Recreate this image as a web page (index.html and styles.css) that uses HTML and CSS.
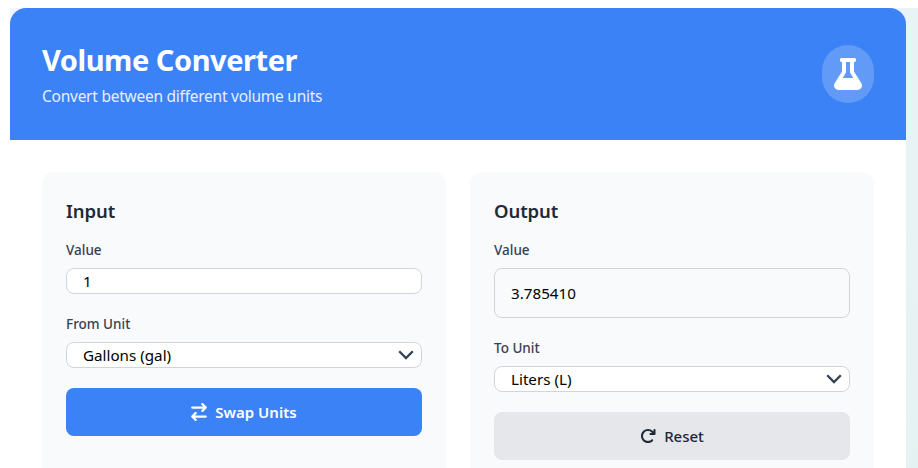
FILE: index.html
```html
<!DOCTYPE html>
<html lang="en">
<head>
    <meta charset="UTF-8">
    <title>Volume Converter</title>
    <link rel="stylesheet" href="styles.css">
</head>
<body>
<div class="wrap">
<div class="card">
    <header class="top">
        <div>
            <h1>Volume Converter</h1>
            <p>Convert between different volume units</p>
        </div>
        <div class="badge">
            <svg class="flask" viewBox="0 0 448 512"><path fill="currentColor" d="M437.2 403.5L320 215V64h8c13.3 0 24-10.7 24-24V24c0-13.3-10.7-24-24-24H120c-13.3 0-24 10.7-24 24v16c0 13.3 10.7 24 24 24h8v151L10.8 403.5C-18.5 450.6 15.3 512 70.9 512h306.2c55.7 0 89.4-61.5 60.1-108.5zM137.9 320l48.2-77.6c3.7-5.2 5.8-11.6 5.8-18.4V64h64v160c0 6.9 2.2 13.2 5.8 18.4l48.2 77.6h-172z"/></svg>
        </div>
    </header>

    <main class="panels">
        <section class="panel">
            <h2>Input</h2>
            <label class="lbl" for="val-in">Value</label>
            <input class="field" id="val-in" type="text" value="1">
            <label class="lbl" for="unit-in">From Unit</label>
            <select class="field pick" id="unit-in">
                <option>Gallons (gal)</option>
                <option>Liters (L)</option>
            </select>
            <button class="btn btn-blue">
                <svg class="ico ico-swap" viewBox="0 0 448 512"><path fill="currentColor" d="M438.6 150.6c12.5-12.5 12.5-32.8 0-45.3l-96-96c-12.5-12.5-32.8-12.5-45.3 0s-12.5 32.8 0 45.3L338.7 96 32 96C14.3 96 0 110.3 0 128s14.3 32 32 32l306.7 0-41.4 41.4c-12.5 12.5-12.5 32.8 0 45.3s32.8 12.5 45.3 0l96-96zm-333.3 352c12.5 12.5 32.8 12.5 45.3 0s12.5-32.8 0-45.3L109.3 416 416 416c17.7 0 32-14.3 32-32s-14.3-32-32-32l-306.7 0 41.4-41.4c12.5-12.5 12.5-32.8 0-45.3s-32.8-12.5-45.3 0l-96 96c-12.5 12.5-12.5 32.8 0 45.3l96 96z"/></svg>
                Swap Units
            </button>
        </section>

        <section class="panel">
            <h2>Output</h2>
            <label class="lbl" for="val-out">Value</label>
            <input class="field field-out" id="val-out" type="text" value="3.785410" readonly>
            <label class="lbl" for="unit-out">To Unit</label>
            <select class="field pick" id="unit-out">
                <option>Liters (L)</option>
                <option>Gallons (gal)</option>
            </select>
            <button class="btn btn-grey">
                <svg class="ico" viewBox="0 0 512 512"><path fill="currentColor" d="M386.3 160H336c-17.7 0-32 14.3-32 32s14.3 32 32 32H464c17.7 0 32-14.3 32-32V64c0-17.7-14.3-32-32-32s-32 14.3-32 32v51.2L414.4 97.6c-87.5-87.5-229.3-87.5-316.8 0s-87.5 229.3 0 316.8s229.3 87.5 316.8 0c12.5-12.5 12.5-32.8 0-45.3s-32.8-12.5-45.3 0c-62.5 62.5-163.8 62.5-226.3 0s-62.5-163.8 0-226.3s163.8-62.5 226.3 0L386.3 160z"/></svg>
                Reset
            </button>
        </section>
    </main>
</div>
</div>
</body>
</html>
```

FILE: styles.css
```css
/* Page */
body {
    margin: 8px 0 0 10px;
    background: #fff;
    font-family: "Noto Sans", "Open Sans", sans-serif;
    color: #1f2937;
}

.wrap {
    background: linear-gradient(135deg, #eff6ff, #e5f2f2);
}

.card {
    width: 896px;
    background: #fff;
    border-radius: 16px;
    overflow: hidden;
}

/* Blue header */
.top {
    display: flex;
    justify-content: space-between;
    align-items: center;
    height: 132px;
    box-sizing: border-box;
    padding: 0 32px;
    background: #3b82f6;
    color: #fff;
}

.top h1 {
    margin: 0 0 5px;
    font-size: 29px;
    line-height: 39px;
    font-weight: 700;
    letter-spacing: -0.45px;
}

.top p {
    margin: 0;
    font-size: 15.5px;
    line-height: 24px;
    letter-spacing: -0.25px;
    color: #e6effe;
}

.badge {
    display: flex;
    align-items: center;
    justify-content: center;
    width: 52px;
    height: 58px;
    border-radius: 9999px;
    background: rgba(255, 255, 255, 0.2);
}

.flask {
    width: 28px;
    height: 32px;
}

/* Two columns */
.panels {
    display: grid;
    grid-template-columns: 1fr 1fr;
    gap: 24px;
    padding: 32px;
}

.panel {
    display: flex;
    flex-direction: column;
    padding: 24px;
    background: #f9fafb;
    border-radius: 12px;
}

.panel h2 {
    margin: 0 0 14px;
    font-size: 18.5px;
    line-height: 30px;
    font-weight: 600;
    letter-spacing: -0.1px;
}

.lbl {
    margin-bottom: 8px;
    font-size: 13.5px;
    line-height: 20px;
    font-weight: 500;
    color: #374151;
}

.field {
    box-sizing: border-box;
    width: 100%;
    height: 26px;
    margin-bottom: 20px;
    padding: 0 16px;
    border: 1px solid #d1d5db;
    border-radius: 8px;
    background: #fff;
    font-family: inherit;
    font-size: 15.2px;
    color: #000;
}

.field-out {
    height: 50px;
    background: #f9fafb;
}

.pick {
    appearance: none;
    background-image: url("data:image/svg+xml,%3Csvg xmlns='http://www.w3.org/2000/svg' viewBox='0 0 16 10'%3E%3Cpath d='M1.2 1.2 8 8l6.8-6.8' fill='none' stroke='%23334155' stroke-width='2.3'/%3E%3C/svg%3E");
    background-repeat: no-repeat;
    background-position: right 7px center;
    background-size: 16px 10px;
}

.btn {
    display: flex;
    align-items: center;
    justify-content: center;
    gap: 8px;
    height: 48px;
    border: 0;
    border-radius: 8px;
    font-family: inherit;
    font-size: 15px;
    font-weight: 600;
}

.btn-blue {
    background: #3b82f6;
    color: #fff;
}

.btn-grey {
    background: #e5e7eb;
    color: #1f2937;
    font-weight: 500;
}

.ico {
    width: 16px;
    height: 16px;
}

.ico-swap {
    height: 18px;
}
```
